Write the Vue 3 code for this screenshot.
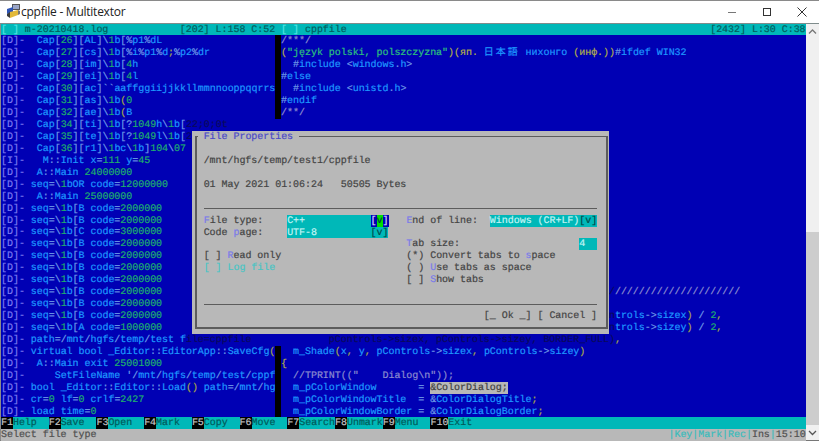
<script setup>
const cap = (n, t) => `[D]-  Cap[${n}]${t}`
const seq = (c, v) => `[D]- seq=\\1b[${c} code=${v}`

const leftRaw = [
  cap(26, '[AL]\\1b[%p1%dL'),
  cap(27, '[cs]\\1b[%i%p1%d;%p2%dr'),
  cap(28, '[im]\\1b[4h'),
  cap(29, '[ei]\\1b[4l'),
  cap(30, '[ac]``aaffggiijjkkllmmnnooppqqrrs'),
  cap(31, '[as]\\1b(0'),
  cap(32, '[ae]\\1b(B'),
  cap(34, '[ti]\\1b[?1049h\\1b[{d|22;0;0t}'),
  cap(35, '[te]\\1b[?1049l\\1b[{d|2}'),
  cap(36, '[r1]\\1bc\\1b]104\\07'),
  '[I]-   M::Init x=111 y=45',
  '[D]-  A::Main 24000000',
  '[D]- seq=\\1bOR code=12000000',
  '[D]-  A::Main 25000000',
  seq('B', 2000000), seq('B', 2000000), seq('C', 3000000), seq('B', 2000000),
  seq('B', 2000000), seq('B', 2000000), seq('B', 2000000), seq('B', 2000000),
  seq('B', 2000000), seq('B', 2000000), seq('A', 1000000),
  '[D]- path=/mnt/hgfs/temp/test f{d|ile=cppfile}',
  '[D]- virtual bool _Editor::EditorApp::SaveCfg(',
  '[D]-  A::Main exit 25001000',
  "[D]-     SetFileName '/mnt/hgfs/temp/test/cppf",
  '[D]- bool _Editor::Editor::Load() path=/mnt/hg',
  '[D]- cr=0 lf=0 crlf=2427',
  '[D]- load time=0'
]

const gap = ' '.repeat(55)
const rightRaw = {
  1: '{c|/***/}',
  2: '{y|(}{s|"język polski, polszczyzna"}{y|)(яп. }{j|日本語} нихонго {y|(инф.))}#ifdef WIN32',
  3: '  #include <windows.h>',
  4: '#else',
  5: '  #include <unistd.h>',
  6: '#endif',
  7: '{c|/**/}',
  22: gap + '{d|/}{c|' + '/'.repeat(21) + '}',
  24: gap + '{d|n}trols->sizex) / 2,',
  25: gap + '{d|n}trols->sizey) / 2,',
  26: '        {d|pControls->sizex, pControls->sizey, BORDER_FULL)},',
  27: '  m_Shade(x, y, pControls->sizex, pControls->sizey)',
  28: '{y|{}',
  29: '  {c|//TPRINT(("    Dialog\\n"));}',
  30: '  m_pColorWindow       = {h|&ColorDialog;}',
  31: '  m_pColorWindowTitle  = &ColorDialogTitle;',
  32: '  m_pColorWindowBorder = &ColorDialogBorder;'
}

const tokenRe = /(\[[DI]\]-?)|(\d+)|([A-Za-zА-яЁё_ąćęłńóśźż][\wА-яЁё]*)|([();,])|(\s+)|([\s\S])/g
const tokenClass = ['tag', 'num', 'key', 'yel', 'ws', 'pun']

function colorize(text) {
  const out = []
  for (const m of text.matchAll(tokenRe)) {
    const index = m.slice(1).findIndex(Boolean)
    out.push({ t: m[0], c: tokenClass[index] })
  }
  return out
}

function parse(raw) {
  const out = []
  const re = /\{(\w)\|([^}]*)\}/g
  let last = 0
  for (const m of raw.matchAll(re)) {
    out.push(...colorize(raw.slice(last, m.index)))
    out.push({ t: m[2], c: 'm-' + m[1] })
    last = m.index + m[0].length
  }
  out.push(...colorize(raw.slice(last)))
  return out
}

const rows = leftRaw.map((l, i) => ({
  id: i + 1,
  left: parse(l),
  right: parse(rightRaw[i + 1] || ' '),
  divider: i + 1 <= 7 || i + 1 >= 27
}))

const sp = (n) => ' '.repeat(n)
const dialogRows = [
  { segs: [[' '], [' File Properties ', 'dtitle']] },
  { segs: [[' ']] },
  { segs: [[sp(2) + '/mnt/hgfs/temp/test1/cppfile']] },
  { segs: [[' ']] },
  { segs: [[sp(2) + '01 May 2021 01:06:24   50505 Bytes']] },
  { segs: [[' ']] },
  { sep: true },
  { segs: [[sp(2)], ['F', 'hot'], ['ile type:' + sp(4)], ['C++' + sp(11), 'field'], ['[', 'ff'], ['v', 'fv'], [']', 'ff'], [sp(3)], ['E', 'hot'], ['nd of line:' + sp(2)], ['Windows (CR+LF)', 'field'], ['[v]', 'fa']] },
  { segs: [[sp(2) + 'Code '], ['p', 'hot'], ['age:' + sp(4)], ['UTF-8' + sp(9), 'field'], ['[v]', 'fa']] },
  { segs: [[sp(36)], ['T', 'hot'], ['ab size:' + sp(20)], ['4  ', 'field']] },
  { segs: [[sp(2) + '[ ] '], ['R', 'hot'], ['ead only' + sp(21) + '(*) Convert tabs to '], ['s', 'hot'], ['pace']] },
  { segs: [[sp(2)], ['[ ] Log file', 'off'], [sp(22) + '( ) '], ['U', 'hot'], ['se tabs as space']] },
  { segs: [[sp(36) + '[ ] '], ['S', 'hot'], ['how tabs']] },
  { segs: [[' ']] },
  { sep: true },
  { segs: [[sp(49) + '[_ Ok _] [ Cancel ]']] },
  { segs: [[' ']] }
]

const fkeys = [
  ['F1', 'Help  '], ['F2', 'Save  '], ['F3', 'Open  '], ['F4', 'Mark  '], ['F5', 'Copy  '],
  ['F6', 'Move  '], ['F7', 'Search'], ['F8', 'Unmark'], ['F9', 'Menu  '], ['F10', 'Exit']
]
</script>

<template>
  <div class="window">
    <header class="titlebar">
      <svg class="appicon" width="15" height="15" viewBox="0 0 15 15">
        <rect x="6" y="0" width="8" height="6" fill="#555" />
        <rect x="7" y="1" width="6" height="4" fill="#9aa6c8" />
        <path d="M1 5 L7 3 L7 8 L1 10 Z" fill="#2f55b5" />
        <path d="M4 8 L12 6 L12 11 L4 14 Z" fill="#e2b93a" />
        <path d="M1 10 L4 8 L4 14 L1 12 Z" fill="#3b3b3b" />
        <path d="M12 6 L14 7 L14 10 L12 11 Z" fill="#777" />
      </svg>
      <span class="apptitle">cppfile - Multitextor</span>
      <div class="controls">
        <svg width="10" height="10" viewBox="0 0 10 10"><path d="M1 5.5H9" stroke="#777" /></svg>
        <svg width="10" height="10" viewBox="0 0 10 10"><rect x="1.5" y="1.5" width="7" height="7" fill="none" stroke="#333" /></svg>
        <svg width="10" height="10" viewBox="0 0 10 10"><path d="M.5 .5L9.5 9.5M9.5 .5L.5 9.5" stroke="#333" /></svg>
      </div>
    </header>

    <div class="body">
      <main class="screen">
        <div class="row head">
          <div class="cell left headcell"><span class="hbr">[  ]</span> m-20210418.log<span class="fill"></span>[202] L:158 C:52</div>
          <div class="cell div"></div>
          <div class="cell right headcell"><span class="hbr">[  ]</span> cppfile<span class="fill"></span>[2432] L:30 C:38</div>
        </div>

        <div v-for="r in rows" :key="r.id" class="row">
          <div class="cell left"><span v-for="(s, i) in r.left" :key="i" :class="s.c">{{ s.t }}</span></div>
          <div class="cell div" :class="{ black: r.divider }"></div>
          <div class="cell right"><span v-for="(s, i) in r.right" :key="i" :class="s.c">{{ s.t }}</span></div>
        </div>

        <div class="row fbar">
          <span v-for="f in fkeys" :key="f[0]"><span class="fk">{{ f[0] }}</span>{{ f[1] }}</span>
        </div>

        <div class="row status">
          <span>Select file type</span>
          <span class="fill"></span>
          <span class="stat">|Key|Mark|Rec|</span><span>Ins</span><span class="stat">|</span><span>15:10</span>
        </div>

        <section class="dialog">
          <div class="frame"></div>
          <template v-for="(d, i) in dialogRows" :key="i">
            <div v-if="d.sep" class="drow sep"><i></i></div>
            <div v-else class="drow"><span v-for="(s, j) in d.segs" :key="j" :class="s[1]">{{ s[0] }}</span></div>
          </template>
        </section>
      </main>

      <aside class="scrollbar">
        <svg class="arrow" width="13" height="16" viewBox="0 0 13 16"><path d="M3 9.5L6.5 6L10 9.5" fill="none" stroke="#777" stroke-width="1.3" /></svg>
        <div class="track"></div>
        <div class="thumb"></div>
        <svg class="arrow" width="13" height="15" viewBox="0 0 13 15"><path d="M3 6L6.5 9.5L10 6" fill="none" stroke="#555" stroke-width="1.3" /></svg>
      </aside>
    </div>
  </div>
</template>

<style>
html, body { margin: 0; background: #fff; }
</style>

<style scoped>
.window {
  --cw: 5.96px;
  --rh: 11.95px;
  width: 819px;
  height: 441px;
  overflow: hidden;
  display: flex;
  flex-direction: column;
  background: #fff;
  box-sizing: border-box;
  border-top: 1px solid #8a8a8a;
}
.titlebar {
  height: 21.5px;
  flex: none;
  display: flex;
  align-items: center;
  padding-left: 6px;
  gap: 0;
  border-bottom: 1px solid #7f8c8c;
  background: #fff;
}
.appicon { flex: none; margin-top: -1px; }
.apptitle {
  font: 12px "Open Sans", "Noto Sans", sans-serif;
  color: #222;
  letter-spacing: -0.25px;
}
.controls {
  margin-left: auto;
  display: flex;
  gap: 25px;
  padding-right: 12px;
}
.body {
  flex: 1;
  min-height: 0;
  display: flex;
  border-left: 1px solid #8a8a8a;
  border-bottom: 1px solid #777;
}
.screen {
  position: relative;
  width: calc(135 * var(--cw));
  flex: none;
  background: #0000b4;
  font-family: "Liberation Mono", "Noto Sans CJK JP", monospace;
  font-size: 10px;
  letter-spacing: -0.04px;
  line-height: calc(var(--rh) + 2px);
  text-rendering: geometricPrecision;
  -webkit-text-stroke: 0.2px;
}
.row {
  height: var(--rh);
  display: flex;
  white-space: pre;
  overflow: hidden;
}
.cell { height: var(--rh); overflow: hidden; white-space: pre; }
.left { width: calc(46 * var(--cw)); flex: none; }
.div { width: var(--cw); flex: none; }
.div.black { background: #000; }
.right { width: calc(88 * var(--cw)); flex: none; }

.head { background: #00b8b8; color: #005e5e; }
.headcell { display: flex; }
.hbr { color: #50e4e4; }
.fill { flex: 1; }

.tag { color: #7c7cf0; }
.num { color: #1fae6e; }
.key { color: #1e98ff; }
.yel { color: #a8a846; }
.pun { color: #6f9ae8; }
.m-d { color: #0a0a5c; }
.m-c { color: #8c8cd0; }
.m-s { color: #2cc07c; }
.m-y { color: #b4b048; }
.m-j { color: #1e98ff; letter-spacing: 1.92px; }
.m-h { background: #b8b8b8; color: #404040; padding-top: 2px; }

.fbar { background: #00b8b8; color: #005a5a; }
.fk { background: #000; color: #c4c4c4; padding-top: 2px; }
.status { background: #b8b8b8; color: #505050; }
.stat { color: #38bcbc; }

.dialog {
  position: absolute;
  left: calc(32 * var(--cw));
  top: calc(9 * var(--rh));
  width: calc(70 * var(--cw));
  height: calc(17 * var(--rh));
  background: #b8b8b8;
  color: #444;
}
.frame {
  position: absolute;
  left: 3px;
  right: 1px;
  top: 5px;
  bottom: 5px;
  border: 1px solid #5c5c5c;
  border-left-width: 2px;
  border-bottom-width: 2px;
  border-right-width: 2px;
}
.drow {
  position: relative;
  height: var(--rh);
  white-space: pre;
  overflow: hidden;
}
.sep {
  display: flex;
  align-items: center;
  padding-left: calc(2 * var(--cw));
}
.sep i {
  display: block;
  width: calc(66 * var(--cw));
  height: 1px;
  background: #5c5c5c;
}
.dtitle { background: #b8b8b8; color: #4a4ac8; }
.hot { color: #7a7ae8; }
.off { color: #48c4c4; }
.field, .fa, .ff, .fv { padding-block: 2px; }
.field { background: #00b8b8; color: #c0f4f4; }
.fa { background: #00b8b8; color: #004a4a; }
.ff { background: #0000b4; color: #d8d8ff; }
.fv { background: #00e000; color: #004040; }

.scrollbar {
  flex: 1;
  display: flex;
  flex-direction: column;
  background: #f0f0f0;
}
.arrow { flex: none; display: block; }
.track { height: 192px; flex: none; }
.thumb { flex: 1; background: #cdcdcd; }
</style>
